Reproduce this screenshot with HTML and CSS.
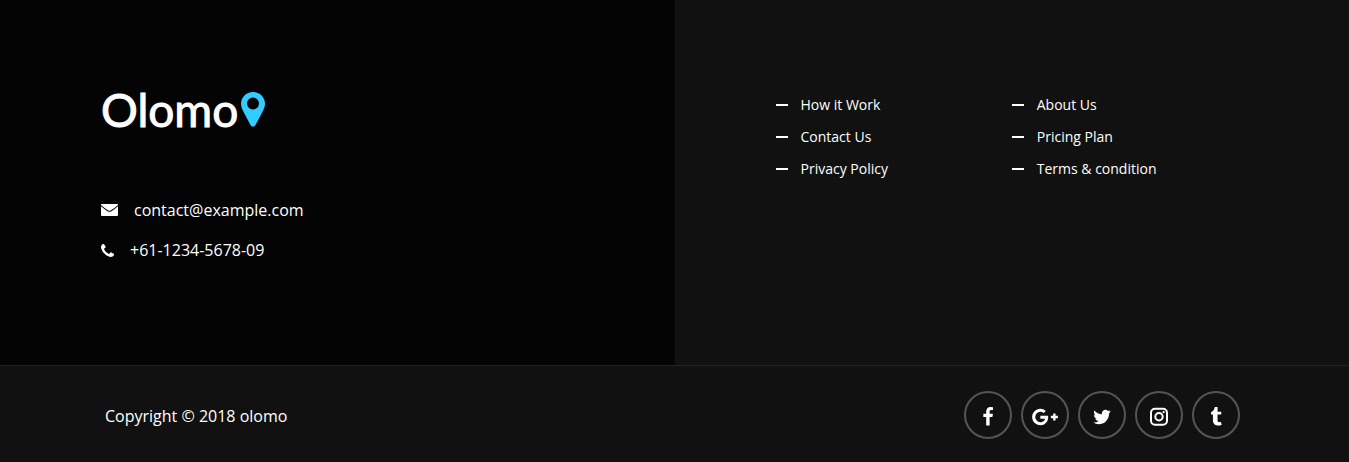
FILE: index.html
```html
<!DOCTYPE html>
<html lang="en">
<head>
<meta charset="utf-8">
<meta name="viewport" content="width=device-width, initial-scale=1">
<title>Olomo</title>
<link rel="stylesheet" href="styles.css">
</head>
<body>
<footer class="footer">
  <div class="footer-main">
    <section class="brand-panel">
      <a class="logo" href="#"><span class="logo-text">Olomo</span><svg class="logo-pin" viewBox="0 0 24 36" aria-hidden="true"><path fill-rule="evenodd" d="M12 0C5.200 0 0 5.300 0 11.800c0 3.200 1.300 5.700 2.600 8.200l6.900 13c1.200 2.300 3.800 2.300 5 0l6.900-13c1.300-2.500 2.600-5 2.600-8.200C24 5.300 18.800 0 12 0zm0 5.600a6 6 0 1 1 0 12 6 6 0 0 1 0-12z"/></svg></a>
      <ul class="contact">
        <li><a href="mailto:contact@example.com"><svg class="icon-mail" viewBox="0 0 17 12" aria-hidden="true"><path d="M.5 0h16q.5 0 .5.500v.500q-3.500 3.200-7 5.300-1.500 1-3 0Q3.500 4.200 0 1V.5Q0 0 .5 0zM0 2.300q3.300 2.900 6.500 4.900 2 1.200 4 0 3.200-2 6.500-4.900V11q0 1-1 1H1q-1 0-1-1z"/></svg>contact@example.com</a></li>
        <li><a href="tel:+611234567809"><svg class="icon-phone" viewBox="192 128 1408 1408" aria-hidden="true"><path d="M1600 1240q0 27-10 70.500t-21 68.500q-21 50-122 106-94 51-186 51-27 0-53-3.500t-57.500-12.500-47-14.500-55.500-20.500-49-18q-98-35-175-83-127-79-264-216t-216-264q-48-77-83-175-3-9-18-49t-20.500-55.500-14.500-47-12.500-57.500-3.500-53q0-92 51-186 56-101 106-122 25-11 68.500-21t70.500-10q14 0 21 3 18 6 53 76 11 19 30 54t35 63.500 31 53.500q3 4 17.500 25t21.500 35.500 7 28.500q0 20-28.500 50t-62 55-62 53-28.500 46q0 9 5 22.500t8.500 20.500 14 24 11.500 19q76 137 174 235t235 174q2 1 19 11.500t24 14 20.500 8.500 22.500 5q18 0 46-28.500t53-62 55-62 50-28.500q14 0 28.500 7t35.500 21.500 25 17.500q25 15 53.500 31t63.500 35 54 30q70 35 76 53 3 7 3 21z"/></svg>+61-1234-5678-09</a></li>
      </ul>
    </section>
    <nav class="links-panel" aria-label="Footer">
      <ul class="links">
        <li><a href="#">How it Work</a></li>
        <li><a href="#">Contact Us</a></li>
        <li><a href="#">Privacy Policy</a></li>
      </ul>
      <ul class="links">
        <li><a href="#">About Us</a></li>
        <li><a href="#">Pricing Plan</a></li>
        <li><a href="#">Terms &amp; condition</a></li>
      </ul>
    </nav>
  </div>
  <div class="footer-bottom">
    <p class="copyright">Copyright © 2018 olomo</p>
    <ul class="social">
      <li><a href="#" aria-label="Facebook"><svg class="icon" viewBox="0 0 1792 1792"><path d="M1343 12v264h-157q-86 0-116 36t-30 108v189h293l-39 296h-254v759h-306v-759h-255v-296h255v-218q0-186 104-288.500t277-102.500q147 0 228 12z"/></svg></a></li>
      <li><a href="#" aria-label="Google Plus"><svg class="icon icon-wide" viewBox="-259 0 2307 1792"><path d="M1181 913q0 208-87 370.500t-248 254-369 91.500q-149 0-285-58t-234-156-156-234-58-285 58-285 156-234 234-156 285-58q286 0 491 192l-199 191q-117-113-292-113-123 0-227.500 62t-165.500 168.500-61 232.500 61 232.500 165.500 168.500 227.500 62q83 0 152.500-23t114.500-57.500 78.500-78.500 49-83 21.500-74h-416v-252h692q12 63 12 122zm867-122v210h-209v209h-210v-209h-209v-210h209v-209h210v209h209z"/></svg></a></li>
      <li><a href="#" aria-label="Twitter"><svg class="icon" viewBox="0 0 1792 1792"><path d="M1684 408q-67 98-162 167 1 14 1 42 0 130-38 259.500t-115.500 248.500-184.500 210.500-258 146-323 54.500q-271 0-496-145 35 4 78 4 225 0 401-138-105-2-188-64.500t-114-159.500q33 5 61 5 43 0 85-11-112-23-185.500-111.500t-73.500-205.500v-4q68 38 146 41-66-44-105-115t-39-154q0-88 44-163 121 149 294.500 238.500t371.500 99.500q-8-38-8-74 0-134 94.500-228.500t228.500-94.500q140 0 236 102 109-21 205-78-37 115-142 178 93-10 186-50z"/></svg></a></li>
      <li><a href="#" aria-label="Instagram"><svg class="icon" viewBox="0 0 20 20"><rect class="outline" x="2" y="1.800" width="16" height="16" rx="4"/><circle class="outline" cx="10" cy="9.800" r="3.700"/><circle cx="14.600" cy="5.200" r="1.100"/></svg></a></li>
      <li><a href="#" aria-label="Tumblr"><svg class="icon" viewBox="0 0 1792 1792"><path d="M1328 1329l80 237q-23 35-111 66t-177 32q-104 2-190.500-26t-142.500-74-95-106-55.500-120-16.500-118v-544h-168v-215q72-26 129-69.500t91-90 58-102 34-99 15-88.500q1-5 4.500-8.500t7.500-3.500h244v424h333v252h-334v518q0 30 6.500 56t22.500 52.500 49.500 41.500 81.500 14q78-2 134-29z"/></svg></a></li>
    </ul>
  </div>
</footer>
</body>
</html>
```

FILE: styles.css
```css
* {
  box-sizing: border-box;
}

body {
  margin: 0;
  background: #111;
  color: #fff;
  font-family: "Open Sans", "Noto Sans", sans-serif;
  font-size: 16px;
  line-height: 24px;
}

ul,
p {
  margin: 0;
  padding: 0;
  list-style: none;
}

a {
  color: inherit;
  text-decoration: none;
}

svg {
  display: block;
  flex: none;
  fill: currentColor;
}

.footer-main {
  display: grid;
  grid-template-columns: 1fr 1fr;
}

.brand-panel {
  padding: 87px 100px 103px 101px;
  background: #040404;
}

.logo {
  display: flex;
  align-items: center;
  gap: 3px;
}

.logo-text {
  font-family: Lato, sans-serif;
  font-size: 46px;
  line-height: 46px;
  -webkit-text-stroke: 1px currentColor;
}

.logo-pin {
  width: 24px;
  height: 36px;
}

.logo-pin {
  color: #3cf;
}

.contact {
  display: grid;
  gap: 16px;
  margin-top: 65px;
}

.contact a {
  display: flex;
  align-items: center;
  gap: 16px;
}

.icon-mail {
  width: 17px;
  height: 12px;
}

.icon-phone {
  width: 13px;
  height: 13px;
}

.links-panel {
  display: grid;
  grid-template-columns: 1fr 1fr;
  align-items: start;
  padding: 94px 101px;
}

.links {
  display: grid;
  gap: 10px;
  font-size: 14px;
  line-height: 22px;
}

.links a {
  display: flex;
  align-items: center;
  gap: 13px;
}

.links a::before {
  content: "";
  width: 12px;
  height: 2px;
  background: #fff;
}

.footer-bottom {
  display: flex;
  align-items: center;
  justify-content: space-between;
  padding: 25px 109px 23px 105px;
  border-top: 1px solid #222;
}

.copyright {
  padding-top: 2px;
}

.social {
  display: flex;
  gap: 9px;
}

.social a {
  display: flex;
  align-items: center;
  justify-content: center;
  width: 48px;
  height: 48px;
  padding-top: 3px;
  border: 2px solid #555;
  border-radius: 50%;
}

.icon {
  width: 20px;
  height: 20px;
}

.icon-wide {
  width: 26px;
}

.outline {
  fill: none;
  stroke: currentColor;
  stroke-width: 2;
}
```
